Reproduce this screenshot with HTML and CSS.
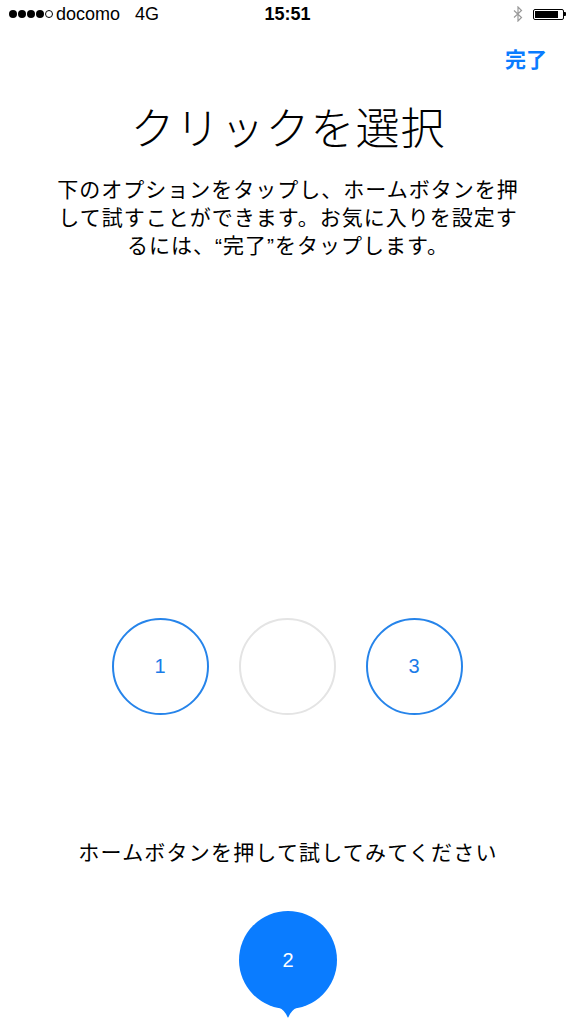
FILE: index.html
```
<!DOCTYPE html>
<html lang="ja">
<head>
    <meta charset="UTF-8">
    <meta name="viewport" content="width=device-width, initial-scale=1.0">
    <title>クリックを選択</title>
    <link rel="stylesheet" href="styles.css">
</head>
<body>
    <div class="status">
        <div class="status-left">
            <span class="signal">
                <i class="dot"></i><i class="dot"></i><i class="dot"></i><i class="dot"></i><i class="dot empty"></i>
            </span>
            <span class="carrier">docomo</span>
            <span class="net">4G</span>
        </div>
        <div class="status-time">15:51</div>
        <div class="status-right">
            <svg class="bt" width="10" height="16" viewBox="0 0 10 16">
                <path d="M1 4.5 L8.5 11.5 L5 15 L5 1 L8.5 4.5 L1 11.5" fill="none" stroke="#9a9a9a" stroke-width="1.2"/>
            </svg>
            <span class="battery"><span class="battery-fill"></span></span>
            <span class="battery-nub"></span>
        </div>
    </div>

    <div class="nav">
        <span class="done">完了</span>
    </div>

    <h1 class="title">クリックを選択</h1>
    <p class="intro">下のオプションをタップし、ホームボタンを押<br>して試すことができます。お気に入りを設定す<br>るには、“完了”をタップします。</p>

    <div class="options">
        <div class="option">1</div>
        <div class="option blank"></div>
        <div class="option">3</div>
    </div>

    <p class="hint">ホームボタンを押して試してみてください</p>

    <div class="bubble">
        <svg width="98" height="108" viewBox="0 0 98 108">
            <circle cx="49" cy="49" r="49" fill="#0a7cff"/>
            <path d="M39 96 Q46 99 49 107 Q52 99 59 96 Z" fill="#0a7cff"/>
        </svg>
        <span class="bubble-num">2</span>
    </div>
</body>
</html>
```

FILE: styles.css
```
body {
    margin: 0;
    font-family: "Liberation Sans", "Noto Sans CJK JP", sans-serif;
    color: #000;
    background-color: #fff;
    display: flex;
    flex-direction: column;
    align-items: center;
}
.status {
    width: 100%;
    height: 28px;
    box-sizing: border-box;
    padding: 0 10px 0 9px;
    display: flex;
    align-items: center;
    justify-content: space-between;
    font-size: 18px;
}
.status-left, .status-right {
    width: 170px;
    display: flex;
    align-items: center;
}
.status-right {
    justify-content: flex-end;
}
.signal {
    display: flex;
    gap: 1px;
    margin-right: 3px;
}
.dot {
    width: 8px;
    height: 8px;
    border-radius: 50%;
    background-color: #000;
    box-sizing: border-box;
}
.dot.empty {
    background-color: #fff;
    border: 1px solid #000;
}
.net {
    margin-left: 15px;
}
.status-time {
    font-weight: bold;
}
.bt {
    margin-right: 10px;
}
.battery {
    width: 31px;
    height: 11px;
    box-sizing: border-box;
    border: 1px solid #000;
    border-radius: 2px;
    padding: 1px;
    display: flex;
}
.battery-fill {
    flex: 1;
    margin-right: 4px;
    background-color: #000;
}
.battery-nub {
    width: 2px;
    height: 4px;
    background-color: #000;
    border-radius: 0 1px 1px 0;
}
.nav {
    width: 100%;
    height: 60px;
    box-sizing: border-box;
    padding-right: 29px;
    display: flex;
    align-items: center;
    justify-content: flex-end;
}
.done {
    color: #0a7cff;
    font-size: 21px;
    font-weight: bold;
}
.title {
    margin: 14px 0 0;
    font-size: 44px;
    line-height: 56px;
    font-weight: 300;
    letter-spacing: 1px;
}
.intro {
    margin: 18px 0 0;
    font-size: 21px;
    line-height: 28px;
    text-align: center;
    letter-spacing: 1px;
}
.options {
    margin-top: 358px;
    display: flex;
    gap: 30px;
    padding-right: 2px;
}
.option {
    width: 97px;
    height: 97px;
    box-sizing: border-box;
    border: 2px solid #2684ea;
    border-radius: 50%;
    display: flex;
    align-items: center;
    justify-content: center;
    color: #1a7ce8;
    font-size: 20px;
}
.option.blank {
    border-color: #e4e4e4;
}
.hint {
    margin: 123px 0 0;
    font-size: 21px;
    line-height: 30px;
    letter-spacing: 1.2px;
}
.bubble {
    margin-top: 43px;
    position: relative;
    width: 98px;
    height: 108px;
}
.bubble svg {
    display: block;
}
.bubble-num {
    position: absolute;
    top: 38px;
    left: 0;
    width: 98px;
    text-align: center;
    color: #fff;
    font-size: 20px;
}
```
